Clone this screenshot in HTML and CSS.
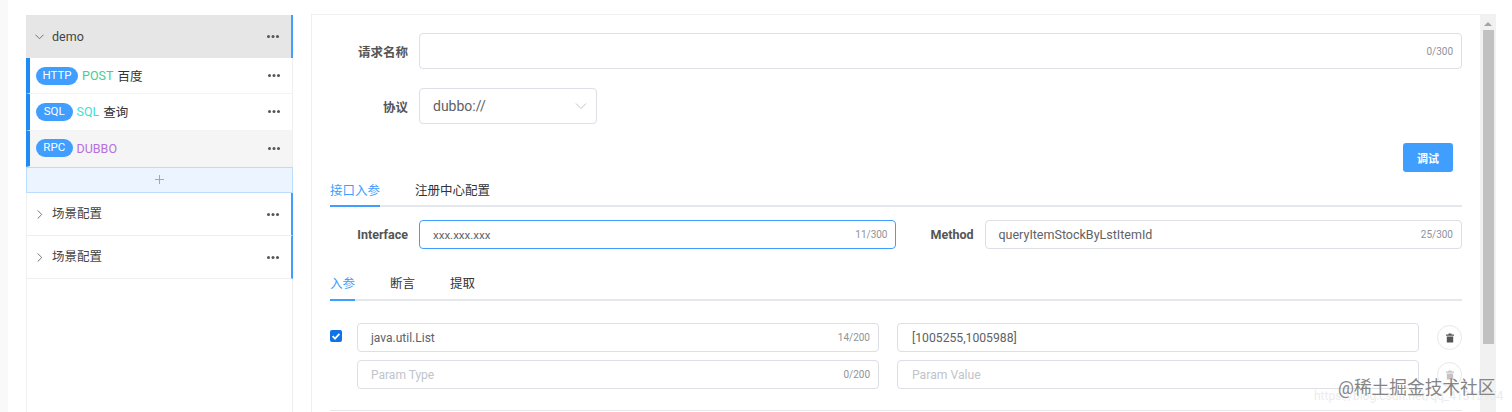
FILE: index.html
```html
<!DOCTYPE html>
<html lang="zh">
<head>
<meta charset="utf-8">
<title>demo</title>
<link rel="stylesheet" href="styles.css">
</head>
<body>
<div class="page">
  <aside class="sidebar">
    <div class="group open">
      <svg class="chev" viewBox="0 0 10 10"><path d="M0.500 3l4.500 4.500L9.500 3"/></svg>
      <span class="group-name">demo</span>
      <span class="more"></span>
    </div>
    <div class="item">
      <span class="pill">HTTP</span><span class="method post">POST</span><span class="name">百度</span>
      <span class="more"></span>
    </div>
    <div class="item">
      <span class="pill">SQL</span><span class="method sql">SQL</span><span class="name">查询</span>
      <span class="more"></span>
    </div>
    <div class="item active">
      <span class="pill">RPC</span><span class="method rpc">DUBBO</span>
      <span class="more"></span>
    </div>
    <div class="add"><svg viewBox="0 0 9 9"><path d="M4.500 0v9M0 4.500h9"/></svg></div>
    <div class="group closed">
      <svg class="chev" viewBox="0 0 10 10"><path d="M3 0.500L7.500 5 3 9.500"/></svg>
      <span class="group-name">场景配置</span>
      <span class="more"></span>
    </div>
    <div class="group closed">
      <svg class="chev" viewBox="0 0 10 10"><path d="M3 0.500L7.500 5 3 9.500"/></svg>
      <span class="group-name">场景配置</span>
      <span class="more"></span>
    </div>
  </aside>

  <main class="panel">
    <div class="content">
      <div class="form-row name-row">
        <label class="label">请求名称</label>
        <div class="input grow"><span class="count">0/300</span></div>
      </div>
      <div class="form-row proto-row">
        <label class="label">协议</label>
        <div class="input select">
          <span class="value">dubbo://</span>
          <svg class="select-chev" viewBox="0 0 12 12"><path d="M1 3.500l5 5 5-5"/></svg>
        </div>
      </div>
      <div class="action-row"><button class="btn">调试</button></div>

      <div class="tabs main-tabs">
        <span class="tab on">接口入参</span>
        <span class="tab">注册中心配置</span>
      </div>

      <div class="form-row iface-row">
        <label class="label">Interface</label>
        <div class="input small grow focus"><span class="value narrow">xxx.xxx.xxx</span><span class="count">11/300</span></div>
        <label class="label">Method</label>
        <div class="input small grow"><span class="value wide">queryItemStockByLstItemId</span><span class="count">25/300</span></div>
      </div>

      <div class="tabs sub-tabs">
        <span class="tab on">入参</span>
        <span class="tab">断言</span>
        <span class="tab">提取</span>
      </div>

      <div class="param-row first">
        <span class="check"><svg viewBox="0 0 12 12"><path d="M2.600 6.200l2.400 2.400 4.400-4.800"/></svg></span>
        <div class="input small ptype"><span class="value">java.util.List</span><span class="count">14/200</span></div>
        <div class="input small pvalue"><span class="value">[1005255,1005988]</span></div>
        <span class="del"><svg viewBox="0 0 12 12"><path d="M4.500 1.500h3v1H10v1.200H2V2.500h2.500zM2.800 4.500h6.400V10.500H2.800z"/></svg></span>
      </div>
      <div class="param-row">
        <span class="check none"></span>
        <div class="input small ptype"><span class="value ph">Param Type</span><span class="count">0/200</span></div>
        <div class="input small pvalue"><span class="value ph">Param Value</span></div>
        <span class="del faded"><svg viewBox="0 0 12 12"><path d="M4.500 1.500h3v1H10v1.200H2V2.500h2.500zM2.800 4.500h6.400V10.500H2.800z"/></svg></span>
      </div>
      <div class="end-line"></div>
    </div>
    <div class="scrollbar">
      <span class="arrow"></span>
      <span class="thumb"></span>
    </div>
  </main>
</div>
<div class="mark-url">https://blog.csdn.net/qq_41315954</div>
<div class="mark">@稀土掘金技术社区</div>
</body>
</html>
```
FILE: styles.css
```css
* { box-sizing: border-box; }
html, body { margin: 0; height: 412px; overflow: hidden; background: #fff; }
body {
  font-family: Roboto, "Noto Sans CJK SC", sans-serif;
  font-size: 12px;
  color: #444;
  position: relative;
}
.page { display: flex; align-items: flex-start; padding: 14px 0 0 26px; height: 412px; overflow: hidden;
  background: linear-gradient(to right, #f9f9f9 0, #f9f9f9 8px, #fff 8px); }

.sidebar { width: 267px; height: 398px; margin-top: 1px; border-left: 1px solid #f0f0f0; border-right: 1px solid #efefef; background: #fff; flex: none; display: flex; flex-direction: column; }
.group { height: 43px; display: flex; align-items: center; padding-left: 8px; padding-right: 12px; border-bottom: 1px solid #eceef2; border-right: 2px solid #409eff; margin-right: -1px; flex: none; }
.group.open { background: #e6e6e6; border-bottom: 0; margin-left: -1px; padding-left: 9px; }
.group.closed { padding-top: 1px; }
.chev { width: 9px; height: 9px; margin-right: 8px; flex: none; }
.chev path { fill: none; stroke: #666; stroke-width: 1; }
.group-name { font-size: 12.500px; color: #444; flex: 1; line-height: 16px; }
.more { display: block; width: 3px; height: 3px; margin-right: 9px; border-radius: 50%; background: #555; box-shadow: 4.500px 0 0 #555, 9px 0 0 #555; flex: none; }

.item { height: 36.330px; display: flex; align-items: center; border-left: 4px solid #1f8cf5; border-bottom: 1px solid #f3f3f3; margin-left: -1px; padding-left: 5px; padding-right: 12px; flex: none; }
.item.active { background: #f5f5f5; }
.pill { background: #409eff; color: #fff; font-size: 11.500px; height: 18px; line-height: 17px; border-radius: 9px; padding: 0 6.500px; min-width: 36.500px; text-align: center; margin-left: 1px; margin-right: 4px; flex: none; }
.method { font-size: 12.500px; margin-right: 4px; }
.post { color: #49cc90; }
.sql { color: #40e0d0; }
.rpc { color: #b670e0; }
.name { font-size: 12.500px; color: #333; flex: 1; }
.item .more { margin-left: auto; }

.add { height: 26px; margin: 0 -1px; border: 1px solid #bcdcfb; background: #ecf5ff; display: flex; align-items: center; justify-content: center; flex: none; }
.add svg { width: 9px; height: 9px; }
.add path { fill: none; stroke: #86aee6; stroke-width: 1; }

.panel { width: 1185px; height: 398px; margin-left: 18px; border: 1px solid #f0f0f0; border-right: 0; border-bottom: 0; display: flex; flex: none; }
.content { width: 1168px; padding: 18px 18px 0 18px; flex: none; }
.scrollbar { width: 16px; background: #f1f1f1; flex: none; display: flex; flex-direction: column; align-items: center; }
.arrow { margin-top: 7px; width: 0; height: 0; border-left: 4px solid transparent; border-right: 4px solid transparent; border-bottom: 4px solid #a3a3a3; }
.thumb { display: block; width: 11px; margin-top: 4px; height: 314px; background: #c1c1c1; }

.form-row { display: flex; align-items: center; }
.label { width: 78px; text-align: right; font-size: 12.500px; font-weight: 700; color: #555; margin-right: 11px; flex: none; }
.input { border: 1px solid #dcdfe6; border-radius: 4px; background: #fff; display: flex; align-items: center; justify-content: space-between; padding: 0 8px 0 13px; flex: none; }
.grow { flex: 1 1 0; }
.name-row { height: 36px; }
.name-row .input { height: 36px; justify-content: flex-end; }
.proto-row { height: 36px; margin-top: 19px; }
.select { width: 178px; height: 36px; padding-right: 9px; }
.select .value { font-size: 14px; color: #606266; }
.select-chev { width: 12px; height: 12px; }
.select-chev path { fill: none; stroke: #c0c4cc; stroke-width: 1; }
.value { font-size: 12px; color: #606266; white-space: nowrap; }
.value.narrow { font-size: 11.500px; }
.value.wide { font-size: 12.500px; }
.pvalue .value { font-size: 12.200px; padding-left: 1px; }
.focus { padding-right: 7px; }
.ph { color: #c0c4cc; }
.count { font-size: 10px; color: #909399; white-space: nowrap; }
.action-row { display: flex; justify-content: flex-end; padding-right: 9px; margin-top: 19px; height: 29px; }
.btn { width: 50px; height: 29px; border: 0; border-radius: 3px; background: #409eff; color: #fff; font: 700 11px Roboto, "Noto Sans CJK SC", sans-serif; padding: 0; }

.tabs { display: flex; }
.tab { display: block; font-size: 12.500px; color: #333; }
.tab.on { color: #409eff; }
.main-tabs { height: 27px; margin-top: 8px; border-bottom: 2px solid #e4e7ed; gap: 35px; line-height: 22px; }
.main-tabs .tab.on { width: 50px; border-bottom: 2px solid #409eff; height: 27px; }
.iface-row { height: 29px; margin-top: 13px; }
.iface-row .input { height: 29px; }
.small { height: 29px; }
.focus { border-color: #409eff; }
.sub-tabs { height: 31px; margin-top: 21px; border-bottom: 2px solid #e4e7ed; gap: 35px; line-height: 28px; }
.sub-tabs .tab.on { width: 25px; border-bottom: 2px solid #409eff; height: 31px; }

.param-row { display: flex; align-items: center; height: 29px; margin-top: 8px; }
.param-row.first { margin-top: 22px; }
.check { width: 12px; height: 12px; border-radius: 2px; background: #0f72e5; margin-right: 15px; flex: none; align-self: flex-start; margin-top: 7px; }
.check svg { display: block; width: 12px; height: 12px; }
.check path { fill: none; stroke: #fff; stroke-width: 1.800; }
.check.none { background: transparent; }
.ptype { width: 522px; margin-right: 18px; }
.pvalue { width: 522px; margin-right: 18px; }
.del { width: 25px; height: 25px; border-radius: 50%; border: 1px solid #e6e8ec; background: #fff; display: flex; align-items: center; justify-content: center; flex: none; }
.del svg { width: 12px; height: 12px; }
.del path { fill: #555; }
.del.faded path { fill: #c4c4c4; }
.end-line { margin-top: 21px; border-top: 1px solid #e4e7ed; }

.mark { position: absolute; left: 1338px; top: 378px; font-size: 17.700px; line-height: 20px; color: #858585; white-space: nowrap; }
.mark-url { position: absolute; left: 1314px; top: 388px; font-size: 12px; line-height: 16px; color: #ececec; white-space: nowrap; }
```
